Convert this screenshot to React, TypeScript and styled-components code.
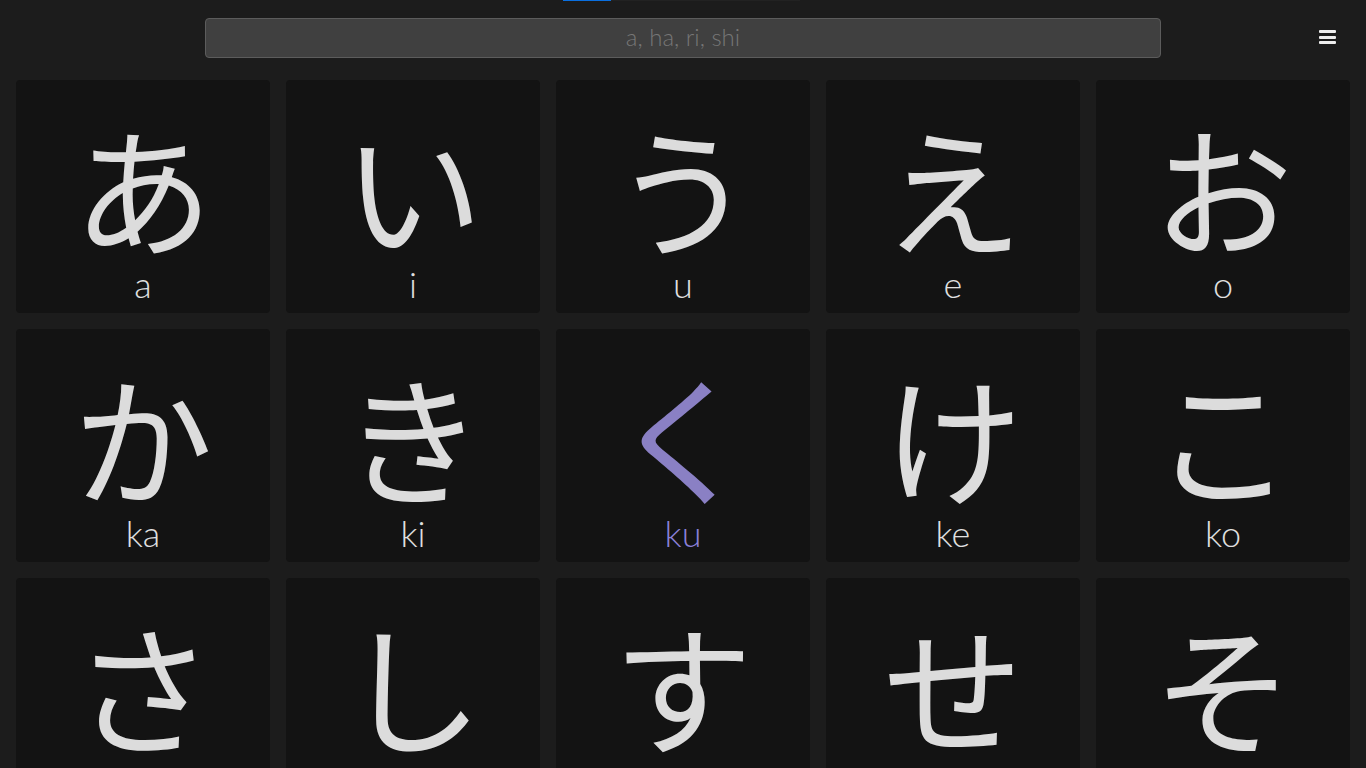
import React from "react";
import styled, { createGlobalStyle } from "styled-components";

const GlobalStyle = createGlobalStyle`
  html, body { margin: 0; padding: 0; background: #1c1c1c; }
  body { font-family: "Lato", "Open Sans", sans-serif; overflow: hidden; }
  * { box-sizing: border-box; }
`;

const Page = styled.div`
  width: 1366px;
  height: 768px;
  background: #1c1c1c;
  overflow: hidden;
  position: relative;
`;

const TopStrip = styled.div`
  position: absolute;
  top: 0;
  left: 563px;
  width: 237px;
  height: 1px;
  background: #222222;
`;

const TopStripFill = styled.div`
  width: 48px;
  height: 1px;
  background: #0a6fe0;
`;

const Header = styled.header`
  height: 80px;
  display: grid;
  grid-template-columns: 205px 1fr 205px;
  align-items: start;
  padding-top: 18px;
`;

const Search = styled.input`
  height: 40px;
  width: 100%;
  background: #404040;
  border: 1px solid #5c5c5c;
  border-radius: 4px;
  color: #dddddd;
  font-family: "Lato", sans-serif;
  font-weight: 300;
  font-size: 24px;
  text-align: center;
  outline: none;
  padding: 0 12px 4px;
  &::placeholder { color: #767676; }
`;

const MenuButton = styled.button`
  justify-self: end;
  margin-right: 30px;
  margin-top: 12px;
  width: 17px;
  height: 14px;
  padding: 0;
  border: 0;
  background: transparent;
  display: flex;
  flex-direction: column;
  justify-content: space-between;
  cursor: pointer;
`;

const MenuBar = styled.span`
  display: block;
  height: 3px;
  width: 17px;
  border-radius: 1px;
  background: #eeeeee;
`;

const Grid = styled.main`
  display: grid;
  grid-template-columns: repeat(5, 254px);
  grid-auto-rows: 233px;
  gap: 16px;
  padding: 0 16px;
`;

const Card = styled.div`
  background: #131313;
  border-radius: 4px;
  display: flex;
  flex-direction: column;
  align-items: center;
  padding-top: 35px;
`;

const Kana = styled.div<{ $active?: boolean }>`
  font-family: "Noto Sans CJK JP", sans-serif;
  font-size: 140px;
  font-weight: 400;
  line-height: 140px;
  height: 140px;
  color: ${(p) => (p.$active ? "#8a80c4" : "#dcdcdc")};
`;

const Romaji = styled.div<{ $active?: boolean }>`
  font-family: "Lato", sans-serif;
  font-weight: 300;
  font-size: 36px;
  line-height: 36px;
  margin-top: 11px;
  color: ${(p) => (p.$active ? "#8a80d8" : "#e0e0e0")};
`;

const items: [string, string][] = [
  ["あ", "a"], ["い", "i"], ["う", "u"], ["え", "e"], ["お", "o"],
  ["か", "ka"], ["き", "ki"], ["く", "ku"], ["け", "ke"], ["こ", "ko"],
  ["さ", "sa"], ["し", "shi"], ["す", "su"], ["せ", "se"], ["そ", "so"],
];

export default function App() {
  return (
    <Page>
      <GlobalStyle />
      <TopStrip>
        <TopStripFill />
      </TopStrip>
      <Header>
        <div />
        <Search placeholder="a, ha, ri, shi" />
        <MenuButton aria-label="menu">
          <MenuBar />
          <MenuBar />
          <MenuBar />
        </MenuButton>
      </Header>
      <Grid>
        {items.map(([k, r]) => (
          <Card key={r}>
            <Kana $active={r === "ku"}>{k}</Kana>
            <Romaji $active={r === "ku"}>{r}</Romaji>
          </Card>
        ))}
      </Grid>
    </Page>
  );
}
